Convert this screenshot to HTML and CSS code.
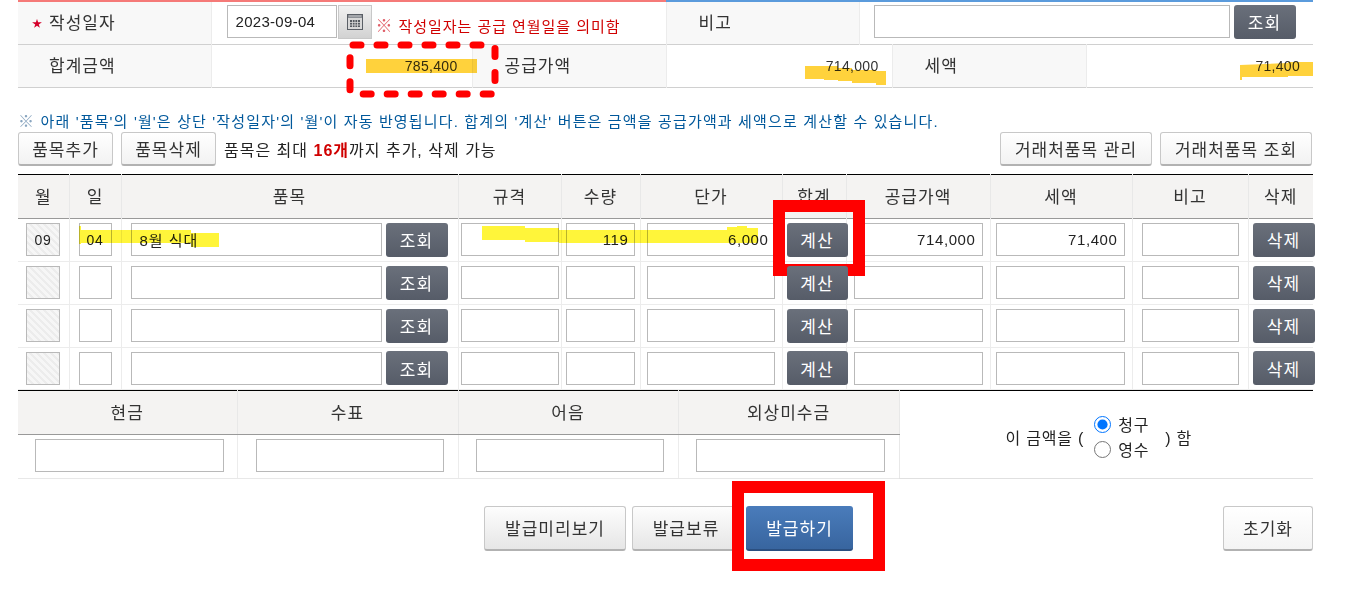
FILE: index.html
```html
<!DOCTYPE html>
<html lang="ko">
<head>
  <meta charset="utf-8"/>
  <title>세금계산서 발급</title>
  <link rel="stylesheet" href="styles.css">
</head>
<body>
  <div class="page">
    <div class="top-line"><span class="red"></span><span class="blue"></span></div>
    <table class="summary">
      <colgroup><col class="s1"><col class="s2"><col class="s3"><col class="s4"><col class="s5"><col class="s6"><col class="s7"></colgroup>
      <tr class="first">
        <th><span class="star">★</span>작성일자</th>
        <td colspan="2">
          <div class="date-cell">
            <input class="date-input" type="text" value="2023-09-04"/>
            <button class="cal-btn" type="button">
              <svg width="18" height="18" viewBox="0 0 18 18">
                <rect x="1.5" y="1.5" width="15" height="15" fill="#d8d8d8" stroke="#5a5f66"/>
                <path d="M2 2h14v3H2z" fill="#8b8f95"/>
                <path d="M4 2.5v1M6 2.5v1M8 2.5v1M10 2.5v1M12 2.5v1M14 2.5v1" stroke="#eee"/>
                <path d="M4 7h10v7H4z" fill="#555a60"/>
                <path d="M3.500 9.500h11M3.500 12h11M6.500 7v7M9 7v7M11.500 7v7" stroke="#d8d8d8" stroke-width=".8"/>
              </svg>
            </button>
            <span class="date-note"><span class="mark">※</span> 작성일자는 공급 연월일을 의미함</span>
          </div>
        </td>
        <th>비고</th>
        <td colspan="3">
          <div class="memo-cell">
            <input class="memo-input" type="text"/>
            <button class="dark-btn memo-btn" type="button">조회</button>
          </div>
        </td>
      </tr>
      <tr class="second">
        <th>합계금액</th>
        <td class="amount">785,400</td>
        <th>공급가액</th>
        <td class="amount" colspan="2">714,000</td>
        <th>세액</th>
        <td class="amount">71,400</td>
      </tr>
    </table>

    <p class="notice"><span class="notice-mark">※</span> 아래 '품목'의 '월'은 상단 '작성일자'의 '월'이 자동 반영됩니다. 합계의 '계산' 버튼은 금액을 공급가액과 세액으로 계산할 수 있습니다.</p>

    <div class="tools">
      <button class="btn tool-btn" type="button">품목추가</button>
      <button class="btn tool-btn" type="button">품목삭제</button>
      <span class="tool-text">품목은 최대 <b>16개</b>까지 추가, 삭제 가능</span>
      <button class="btn partner-btn push" type="button">거래처품목 관리</button>
      <button class="btn partner-btn" type="button">거래처품목 조회</button>
    </div>

    <table class="items">
      <colgroup>
        <col class="c1"><col class="c2"><col class="c3"><col class="c4"><col class="c5"><col class="c6">
        <col class="c7"><col class="c8"><col class="c9"><col class="c10"><col class="c11">
      </colgroup>
      <thead>
        <tr><th>월</th><th>일</th><th>품목</th><th>규격</th><th>수량</th><th>단가</th><th>합계</th><th>공급가액</th><th>세액</th><th>비고</th><th>삭제</th></tr>
      </thead>
      <tbody>
        <tr>
          <td><input class="i-month" type="text" value="09"/></td>
          <td><input class="i-day" type="text" value="04"/></td>
          <td><div class="item-cell"><input class="i-name" type="text" value="8월 식대"/><button class="dark-btn" type="button">조회</button></div></td>
          <td><input class="i-spec" type="text"/></td>
          <td><input class="i-qty" type="text" value="119"/></td>
          <td><input class="i-price" type="text" value="6,000"/></td>
          <td><button class="dark-btn calc" type="button">계산</button></td>
          <td><input class="i-supply" type="text" value="714,000"/></td>
          <td><input class="i-tax" type="text" value="71,400"/></td>
          <td><input class="i-memo" type="text"/></td>
          <td><button class="dark-btn calc" type="button">삭제</button></td>
        </tr>
        <tr>
          <td><input class="i-month" type="text"/></td>
          <td><input class="i-day" type="text"/></td>
          <td><div class="item-cell"><input class="i-name" type="text"/><button class="dark-btn" type="button">조회</button></div></td>
          <td><input class="i-spec" type="text"/></td>
          <td><input class="i-qty" type="text"/></td>
          <td><input class="i-price" type="text"/></td>
          <td><button class="dark-btn calc" type="button">계산</button></td>
          <td><input class="i-supply" type="text"/></td>
          <td><input class="i-tax" type="text"/></td>
          <td><input class="i-memo" type="text"/></td>
          <td><button class="dark-btn calc" type="button">삭제</button></td>
        </tr>
        <tr>
          <td><input class="i-month" type="text"/></td>
          <td><input class="i-day" type="text"/></td>
          <td><div class="item-cell"><input class="i-name" type="text"/><button class="dark-btn" type="button">조회</button></div></td>
          <td><input class="i-spec" type="text"/></td>
          <td><input class="i-qty" type="text"/></td>
          <td><input class="i-price" type="text"/></td>
          <td><button class="dark-btn calc" type="button">계산</button></td>
          <td><input class="i-supply" type="text"/></td>
          <td><input class="i-tax" type="text"/></td>
          <td><input class="i-memo" type="text"/></td>
          <td><button class="dark-btn calc" type="button">삭제</button></td>
        </tr>
        <tr class="short">
          <td><input class="i-month" type="text"/></td>
          <td><input class="i-day" type="text"/></td>
          <td><div class="item-cell"><input class="i-name" type="text"/><button class="dark-btn" type="button">조회</button></div></td>
          <td><input class="i-spec" type="text"/></td>
          <td><input class="i-qty" type="text"/></td>
          <td><input class="i-price" type="text"/></td>
          <td><button class="dark-btn calc" type="button">계산</button></td>
          <td><input class="i-supply" type="text"/></td>
          <td><input class="i-tax" type="text"/></td>
          <td><input class="i-memo" type="text"/></td>
          <td><button class="dark-btn calc" type="button">삭제</button></td>
        </tr>
      </tbody>
    </table>

    <table class="payment">
      <colgroup><col class="p1"><col class="p2"><col class="p3"><col class="p4"><col class="p5"></colgroup>
      <tr class="pay-head">
        <th>현금</th><th>수표</th><th>어음</th><th>외상미수금</th>
        <td class="claim" rowspan="2">
          <div class="claim-box">
            <span>이 금액을 (</span>
            <div class="radios">
              <label><input type="radio" name="claim" checked/>청구</label>
              <label><input type="radio" name="claim"/>영수</label>
            </div>
            <span>) 함</span>
          </div>
        </td>
      </tr>
      <tr class="pay-row">
        <td><input class="p-cash" type="text"/></td>
        <td><input class="p-check" type="text"/></td>
        <td><input class="p-note" type="text"/></td>
        <td><input class="p-credit" type="text"/></td>
      </tr>
    </table>

    <div class="actions">
      <button class="btn act-btn a-preview" type="button">발급미리보기</button>
      <button class="btn act-btn a-hold" type="button">발급보류</button>
      <button class="btn act-btn primary" type="button">발급하기</button>
      <button class="btn act-btn a-reset" type="button">초기화</button>
    </div>
  </div>

  <!-- marks drawn over the screenshot -->
  <svg class="marks" width="1363" height="593" viewBox="0 0 1363 593">
    <g class="orange">
      <path d="M366 59h111v14H366z"/>
      <path d="M805 66h33v2h14v2h24v1h10v14h-10v-2h-24v-2h-14v-1h-14v-1h-19z"/>
      <path d="M1240 65l48-2v-1h25v14h-25v1h-46v3h-2z"/>
    </g>
    <g class="yellow">
      <path d="M79 226h2v4h110v3h28v14h-28v-4H81v1h-2z"/>
      <path d="M482 226h43v2h34v2h168v-3h10v-1h10v2h11v15H559v-1h-34v-2h-43z"/>
    </g>
    <rect class="dash" x="350" y="45" width="145" height="49" rx="3"/>
    <rect class="box" x="779" y="206" width="80" height="64"/>
    <rect class="box" x="738" y="487" width="141" height="78"/>
  </svg>
</body>
</html>
```

FILE: styles.css
```css
* {
  box-sizing: border-box;
}
body {
  margin: 0;
  background: #fff;
  color: #333;
  font-family: "Liberation Sans", "Noto Sans CJK KR", sans-serif;
  font-size: 15px;
}
.page {
  width: 1295px;
  margin-left: 18px;
}
table {
  width: 100%;
  border-collapse: collapse;
  table-layout: fixed;
}
th, td {
  padding: 0;
  font-weight: 400;
}
input[type="text"] {
  display: block;
  height: 33px;
  padding: 0 6px;
  border: 1px solid #b9b9b9;
  background: #fff;
  color: #222;
  font: inherit;
  font-size: 15px;
  letter-spacing: .6px;
}
button {
  font-family: inherit;
  cursor: pointer;
}

.top-line {
  display: flex;
  height: 2px;
}
.top-line .red {
  width: 648px;
  background: #f57a78;
}
.top-line .blue {
  flex: 1;
  background: #5b9bdc;
}

/* summary */
.s1 { width: 193px; }
.s2 { width: 261px; }
.s3 { width: 194px; }
.s4 { width: 193px; }
.s5 { width: 33px; }
.s6 { width: 194px; }
.s7 { width: 227px; }
.summary tr {
  border-bottom: 1px solid #d0d0d0;
}
.summary .first {
  height: 42px;
}
.summary .second {
  height: 43px;
}
.summary th {
  padding: 0 0 3px 32px;
  background: #f8f8f8;
  border-right: 1px solid #ececec;
  border-left: 1px solid #ececec;
  font-size: 17px;
  letter-spacing: 1px;
  text-align: left;
}
.summary th:first-child {
  border-left: 0;
  padding-left: 31px;
}
.star {
  display: inline-block;
  width: 17px;
  margin-left: -17px;
  color: #d4002a;
  font-size: 10px;
  vertical-align: 2px;
}
.date-cell {
  display: flex;
  align-items: center;
  padding: 0 0 2px 15px;
}
.date-input {
  width: 110px;
  padding: 0 8px !important;
  letter-spacing: .3px !important;
}
.cal-btn {
  display: flex;
  align-items: center;
  justify-content: center;
  width: 34px;
  height: 34px;
  margin-left: 1px;
  padding: 0;
  border: 1px solid #c8c8c8;
  background: linear-gradient(#f2f2f2, #d2d2d2);
}
.date-note {
  margin: 5px 0 0 4px;
  color: #d00000;
  font-size: 15px;
  letter-spacing: .95px;
}
.date-note .mark {
  color: #e0606a;
  font-size: 17px;
}
.memo-cell {
  display: flex;
  align-items: center;
  gap: 4px;
  padding: 0 0 2px 14px;
}
.memo-input {
  width: 356px;
}
.dark-btn {
  flex: none;
  width: 62px;
  height: 34px;
  padding: 0;
  border: 0;
  border-radius: 3px;
  background: linear-gradient(#6a707b, #565c68);
  color: #fff;
  font-size: 17px;
  letter-spacing: 1px;
}
.amount {
  padding: 0 13px 0 0;
  border-right: 0;
  text-align: right;
  font-size: 14px;
  letter-spacing: .3px;
}
.second td:nth-child(2) {
  padding-right: 14px;
}

/* notice and tool row */
.notice {
  margin: 24px 0 0;
  color: #00589b;
  font-size: 15px;
  line-height: 20px;
  letter-spacing: 1.15px;
  white-space: nowrap;
}
.notice-mark {
  color: #8aa6c0;
  font-size: 16px;
}
.tools {
  display: flex;
  align-items: center;
  gap: 8px;
  height: 34px;
  padding-right: 1px;
}
.btn {
  border: 1px solid #c8c8c8;
  border-bottom: 2px solid #b2b2b2;
  border-radius: 3px;
  background: linear-gradient(#fff, #f2f2f2);
  color: #333;
  font-size: 17px;
  letter-spacing: 1px;
}
.tool-btn {
  width: 95px;
  height: 34px;
  padding: 0;
}
.partner-btn {
  width: 152px;
  height: 34px;
  padding: 0;
}
.push {
  margin-left: auto;
}
.tool-text {
  color: #222;
  font-size: 16px;
  letter-spacing: 1px;
}
.tool-text b {
  color: #d00000;
  font-weight: 700;
}

/* items table */
.items {
  margin-top: 8px;
  border-top: 1px solid #000;
}
.c1 { width: 51px; }
.c2 { width: 52px; }
.c3 { width: 337px; }
.c4 { width: 103px; }
.c5 { width: 79px; }
.c6 { width: 142px; }
.c7 { width: 64px; }
.c8 { width: 144px; }
.c9 { width: 142px; }
.c10 { width: 116px; }
.c11 { width: 65px; }
.items thead tr {
  height: 44px;
  border-bottom: 1px solid #999;
}
.items th, .payment th {
  background: #f4f3f2;
  border-left: 1px solid #e8e8e8;
  font-size: 17px;
  letter-spacing: 1px;
  text-align: center;
}
.items th:first-child, .payment th:first-child {
  border-left: 0;
}
.items th {
  padding-bottom: 2px;
}
.items tbody tr {
  height: 43px;
  border-bottom: 1px solid #ececec;
}
.items tbody tr.short {
  height: 42px;
}
.items td {
  border-left: 1px solid #ececec;
}
.items td:first-child {
  border-left: 0;
}
.items td:nth-child(1) { padding-left: 8px; }
.items td:nth-child(2) { padding-left: 9px; }
.items td:nth-child(3) { padding-left: 9px; }
.items td:nth-child(4) { padding-left: 2px; }
.items td:nth-child(5) { padding-left: 4px; }
.items td:nth-child(6) { padding-left: 6px; }
.items td:nth-child(7) { padding-left: 4px; }
.items td:nth-child(8) { padding-left: 7px; }
.items td:nth-child(9) { padding-left: 5px; }
.items td:nth-child(10) { padding-left: 9px; }
.items td:nth-child(11) { padding-left: 4px; }
.items td:nth-child(11) .calc { width: 62px; }
.i-month {
  width: 34px;
  padding: 0 !important;
  background: repeating-linear-gradient(45deg, #f6f6f6 0 3px, #ececec 3px 5px) !important;
  text-align: center;
  font-size: 14px !important;
}
.i-day {
  width: 33px;
  padding: 0 !important;
  text-align: center;
  font-size: 14px !important;
}
.i-name {
  width: 251px;
  padding: 0 8px !important;
  letter-spacing: 1px !important;
}
.item-cell {
  display: flex;
  align-items: center;
  gap: 4px;
}
.i-spec { width: 98px; }
.i-qty { width: 69px; padding-right: 5px !important; text-align: right; }
.i-price { width: 128px; padding-right: 5px !important; text-align: right; }
.i-supply { width: 129px; text-align: right; }
.i-tax { width: 129px; text-align: right; }
.i-memo { width: 97px; }
.calc {
  display: block;
  position: relative;
  z-index: 1;
  width: 61px;
}

/* payment table */
.payment {
  border-top: 1px solid #000;
}
.p1 { width: 219px; }
.p2 { width: 221px; }
.p3 { width: 220px; }
.p4 { width: 221px; }
.p5 { width: 414px; }
.pay-head {
  height: 44px;
}
.payment th {
  border-bottom: 1px solid #999;
  padding-bottom: 2px;
}
.pay-row {
  height: 44px;
}
.pay-row td {
  padding-top: 4px;
  vertical-align: top;
  border-left: 1px solid #ececec;
  border-bottom: 1px solid #e8e8e8;
}
.pay-row td:first-child {
  border-left: 0;
  padding-left: 17px;
}
.pay-row td:nth-child(2) { padding-left: 18px; }
.pay-row td:nth-child(3) { padding-left: 17px; }
.pay-row td:nth-child(4) { padding-left: 17px; }
.p-cash { width: 189px; }
.p-check { width: 188px; }
.p-note { width: 188px; }
.p-credit { width: 189px; }
.claim {
  border-left: 1px solid #e8e8e8;
  border-bottom: 1px solid #e0e0e0;
}
.claim-box {
  display: flex;
  align-items: center;
  padding: 5px 0 0 106px;
  font-size: 16px;
  letter-spacing: .8px;
  color: #222;
}
.radios {
  display: flex;
  flex-direction: column;
  margin: 0 16px 0 10px;
}
.radios label {
  display: flex;
  align-items: center;
  height: 25px;
}
.radios input {
  width: 17px;
  height: 17px;
  margin: 0 7px 0 0;
}

/* bottom actions */
.actions {
  display: flex;
  gap: 6px;
  margin-top: 27px;
  padding: 0 0 0 466px;
}
.act-btn {
  height: 45px;
  padding: 0;
  background: linear-gradient(#fdfdfd, #e6e6e6);
  border-bottom-width: 2px;
}
.a-preview { width: 142px; }
.a-hold { width: 108px; }
.primary {
  width: 107px;
  border: 0;
  border-bottom: 2px solid #2b4f80;
  background: linear-gradient(#4a7cbb, #38659f);
  color: #fff;
}
.a-reset {
  width: 90px;
  margin-left: auto;
  background: linear-gradient(#fff, #f4f4f4);
}

/* annotations */
.marks {
  position: absolute;
  left: 0;
  top: 0;
  pointer-events: none;
}
.orange {
  fill: #ffd23c;
  mix-blend-mode: multiply;
}
.yellow {
  fill: #fff53a;
  mix-blend-mode: multiply;
}
.dash {
  fill: none;
  stroke: #f00;
  stroke-width: 7;
  stroke-linecap: round;
  stroke-dasharray: 8 16;
}
.box {
  fill: none;
  stroke: #f00;
  stroke-width: 12;
}
```
